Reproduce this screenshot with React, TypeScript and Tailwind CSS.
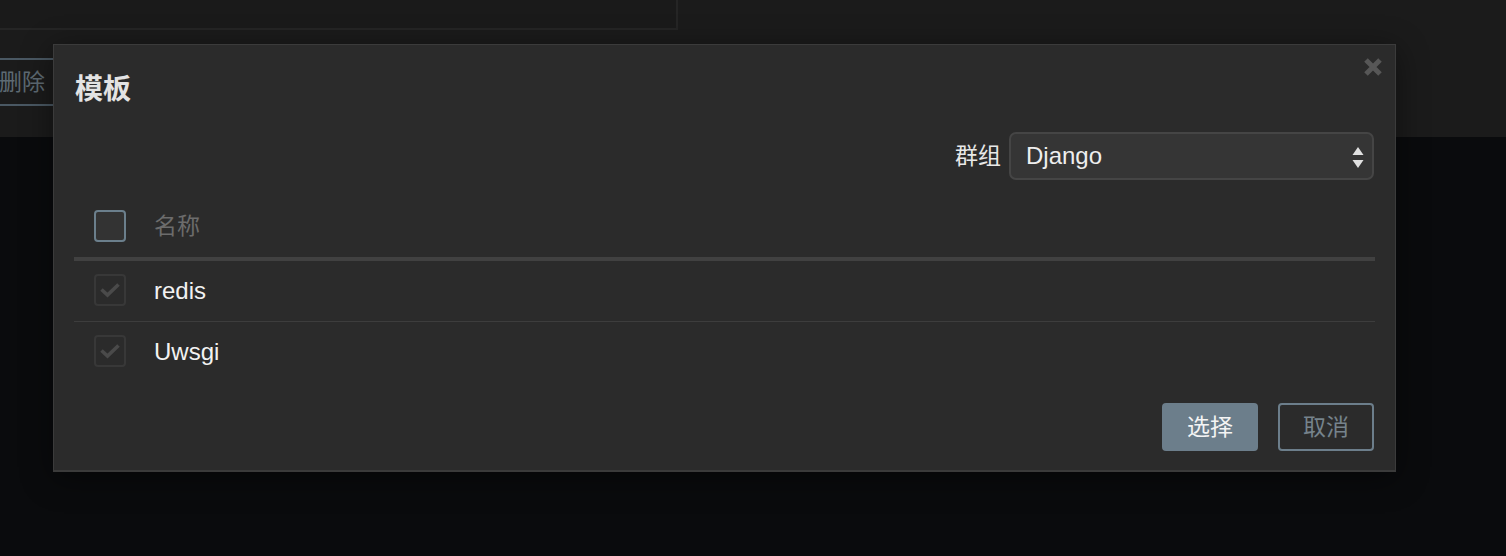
const font = { fontFamily: '"Liberation Sans", "Noto Sans CJK SC", sans-serif' };

function Check() {
  return (
    <svg width="22" height="16" viewBox="0 0 22 16" className="block">
      <path d="M2.5 7.5 L8.5 13 L19.5 2.5" fill="none" stroke="#4a4a4a" strokeWidth="3.6" />
    </svg>
  );
}

function Row({ name, last }: { name: string; last?: boolean }) {
  return (
    <div className={`flex items-center h-[61px] ${last ? "" : "border-b border-[#3d3d3d]"}`}>
      <div className="ml-[20px] -mt-[3px] w-[32px] h-[32px] rounded-[4px] border-2 border-[#383838] flex items-center justify-center">
        <Check />
      </div>
      <span className="ml-[28px] -mt-[1px] text-[24px] text-[#f2f2f2] leading-none">{name}</span>
    </div>
  );
}

export default function App() {
  return (
    <div className="relative w-[1506px] h-[556px] bg-[#0a0b0d] overflow-hidden" style={font}>
      <div className="h-[137px] bg-[#1b1b1b]">
        <div className="w-[678px] h-[30px] bg-[#1a1a1a] border-r-2 border-b-2 border-[#252525]" />
        <div className="mt-[28px] -ml-[17px] w-[90px] h-[48px] border-2 border-[#4a5863] rounded-[4px] flex items-center pl-[14px] text-[23px] text-[#5e6a73]">
          删除
        </div>
      </div>

      <div className="absolute left-[53px] top-[44px] w-[1343px] h-[428px] bg-[#2b2b2b] border border-[#3b3b3b] border-b-2 shadow-[0_6px_30px_rgba(0,0,0,0.45)]">
        <button className="absolute right-[12px] top-[12px] w-[20px] h-[20px] flex items-center justify-center">
          <svg width="20" height="20" viewBox="0 0 20 20">
            <path d="M3 3 L17 17 M17 3 L3 17" stroke="#575757" strokeWidth="5" />
          </svg>
        </button>

        <h4 className="ml-[21px] mt-[29px] text-[28px] leading-[32px] font-bold text-[#e3e3e3]">模板</h4>

        <div className="mt-[26px] pr-[21px] flex items-center justify-end">
          <span className="text-[23px] text-[#e8e8e8] mr-[8px]">群组</span>
          <div className="relative w-[365px] h-[48px] rounded-[7px] border-2 border-[#454545] bg-[#353535] flex items-center pl-[15px]">
            <span className="text-[24px] text-[#eeeeee]">Django</span>
            <svg className="absolute right-[8px] top-[13px]" width="12" height="22" viewBox="0 0 12 22">
              <path d="M6 0 L11.5 8 L0.5 8 Z" fill="#e0e0e0" />
              <path d="M0.5 13 L11.5 13 L6 21 Z" fill="#e0e0e0" />
            </svg>
          </div>
        </div>

        <div className="mx-[20px] mt-[15px]">
          <div className="flex items-center h-[66px] border-b-4 border-[#414141]">
            <div className="ml-[20px] w-[32px] h-[32px] rounded-[4px] border-2 border-[#6b7f8c] bg-[#333333]" />
            <span className="ml-[28px] mt-[1px] text-[23px] text-[#6c6c6c]">名称</span>
          </div>
          <Row name="redis" />
          <Row name="Uwsgi" last />
        </div>

        <div className="mt-[20px] pr-[21px] flex justify-end gap-[20px]">
          <button className="w-[96px] h-[48px] rounded-[4px] bg-[#6c7e8b] text-[23px] text-[#f4f4f4]">选择</button>
          <button className="w-[96px] h-[48px] rounded-[4px] border-2 border-[#6c7e8b] text-[23px] text-[#76838c]">取消</button>
        </div>
      </div>
    </div>
  );
}
